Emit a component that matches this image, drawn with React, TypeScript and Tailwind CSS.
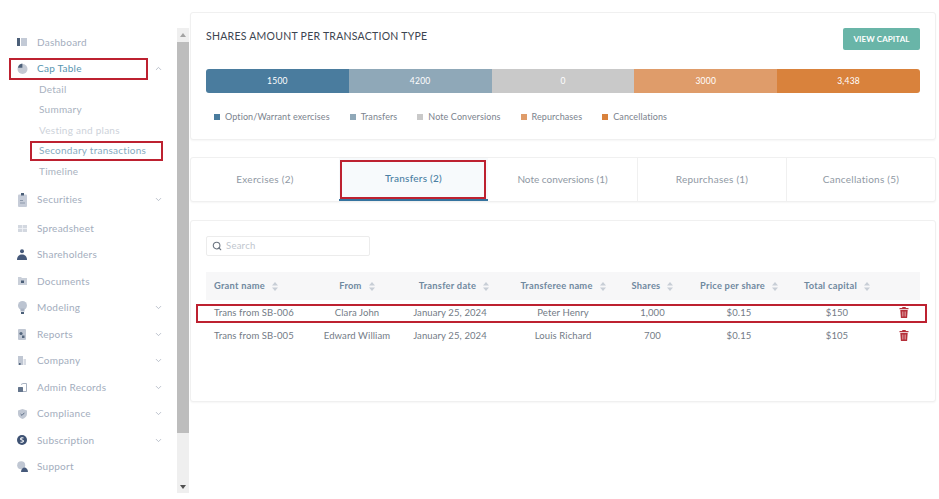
import React from "react";
import { ChevronDown, ChevronUp, Search } from "lucide-react";

const Dash = () => (
  <svg width="10" height="8" viewBox="0 0 10 8"><rect x="0" y="0" width="3" height="8" fill="#4b5f78" /><rect x="4" y="0" width="6" height="8" fill="#c3cad6" /></svg>
);
const Pie = () => (
  <svg width="11" height="11" viewBox="0 0 11 11"><circle cx="5.5" cy="6" r="5" fill="#c4cad4" /><path d="M5.4 0.6 A5 5 0 0 0 1 4.8 L5.4 4.8Z" fill="#4b5f78" /></svg>
);
const Clip = () => (
  <svg width="9" height="14" viewBox="0 0 9 14"><rect x="0" y="1.5" width="9" height="12.5" rx="1" fill="#c6ccd8" /><rect x="3" y="0" width="3" height="2.5" fill="#4b5f78" /><rect x="2" y="7" width="3" height="1" fill="#8d99ab" /><rect x="2" y="9.5" width="5" height="1" fill="#8d99ab" /></svg>
);
const Sheet = () => (
  <svg width="9" height="7" viewBox="0 0 9 7"><rect width="9" height="7" fill="#d3d8e0" /><path d="M4.5 0V7M0 3.5H9" stroke="#f3f4f7" strokeWidth="0.8" /></svg>
);
const Person = () => (
  <svg width="10" height="11" viewBox="0 0 10 11"><circle cx="5" cy="2.2" r="2" fill="#46597a" /><path d="M0 11C0 7 2.5 5.5 5 5.5S10 7 10 11Z" fill="#46597a" /></svg>
);
const Folder = () => (
  <svg width="9" height="8" viewBox="0 0 9 8"><path d="M0 0H3L4 1H9V8H0Z" fill="#c9cfd9" /><rect x="3" y="3.5" width="3" height="2.5" fill="#4b5f78" /></svg>
);
const Bulb = () => (
  <svg width="9" height="13" viewBox="0 0 9 13"><circle cx="4.5" cy="4.5" r="4.5" fill="#bcc4d1" /><rect x="2.5" y="7.5" width="4" height="3" fill="#aab3c3" /><rect x="3" y="11" width="3" height="2" fill="#4b5f78" /></svg>
);
const Report = () => (
  <svg width="8" height="11" viewBox="0 0 8 11"><rect width="8" height="11" rx="1" fill="#c0c7d3" /><circle cx="3" cy="4.5" r="1.6" fill="#56687f" /><rect x="4" y="6.5" width="2.5" height="2.5" fill="#56687f" /></svg>
);
const Building = () => (
  <svg width="8" height="9" viewBox="0 0 8 9"><rect width="5" height="9" fill="#c0c7d3" /><rect x="5.5" y="3" width="2.5" height="6" fill="#d7dbe3" /><rect x="1" y="7" width="1.6" height="2" fill="#56687f" /></svg>
);
const Admin = () => (
  <svg width="9" height="9" viewBox="0 0 9 9"><path d="M3 1.5L5 0.5H8.5V8.5H5" fill="none" stroke="#a9b2c1" /><rect x="0" y="4" width="5" height="5" rx="0.5" fill="#64758c" /></svg>
);
const Shield = () => (
  <svg width="9" height="10" viewBox="0 0 9 10"><path d="M4.5 0L9 1.6V5C9 7.5 6.8 9 4.5 10 2.2 9 0 7.5 0 5V1.6Z" fill="#c0c7d3" /><path d="M2.6 5L4 6.4L6.4 3.8" fill="none" stroke="#5c6d85" strokeWidth="1" /></svg>
);
const Coin = () => (
  <svg width="10" height="10" viewBox="0 0 10 10"><circle cx="5" cy="5" r="5" fill="#3e5273" /><path d="M6.5 3.2C5.8 2.6 3.6 2.6 3.6 3.9 3.6 5.2 6.5 4.8 6.5 6.1 6.5 7.4 4.2 7.4 3.5 6.8" fill="none" stroke="#fff" strokeWidth="1.1" /></svg>
);
const Support = () => (
  <svg width="11" height="11" viewBox="0 0 11 11"><circle cx="4.2" cy="4.2" r="4" fill="#c0c7d3" /><path d="M4 11C4 8 6 6.5 7.5 6.5S11 8 11 11Z" fill="#46597a" /></svg>
);

const Main = ({ icon, label, arrow, className = "" }: { icon: React.ReactNode; label: string; arrow?: boolean; className?: string }) => (
  <div className={`flex h-[26.5px] items-center text-[#a3adbd] ${className}`}>
    <span className="flex w-[37px] shrink-0 justify-center pl-[10px] pr-[3px]">{icon}</span>
    <span>{label}</span>
    {arrow && <ChevronDown className="ml-auto mr-[14px] text-[#a7afbc]" size={9} strokeWidth={2} />}
  </div>
);

const Sub = ({ label, className = "text-[#a9b2c0]" }: { label: string; className?: string }) => (
  <div className={`flex h-[20.5px] items-center pl-[39px] ${className}`}>{label}</div>
);

const Swatch = ({ color, label }: { color: string; label: string }) => (
  <div className="flex items-center gap-[5px]">
    <span className={`h-[6px] w-[6px] ${color}`} />
    <span>{label}</span>
  </div>
);

const Sort = () => (
  <svg className="ml-[7px] shrink-0" width="6" height="9" viewBox="0 0 6 9"><path d="M3 0L6 3.5H0ZM3 9L0 5.5H6Z" fill="#c8ced6" /></svg>
);

const Head = ({ label, className = "justify-center" }: { label: string; className?: string }) => (
  <div className={`flex items-center ${className}`}>
    <span>{label}</span>
    <Sort />
  </div>
);

const rowGrid = "grid grid-cols-[106px_90px_104px_114px_65px_108px_88px_39px]";

const Row = ({ cells }: { cells: string[] }) => (
  <div className={`${rowGrid} h-[23px] items-center text-[9.5px] tracking-[0.1px] text-[#737b86]`}>
    <div className="pl-[8px]">{cells[0]}</div>
    <div className="text-center">{cells[1]}</div>
    <div className="pr-[8px] text-center">{cells[2]}</div>
    <div className="text-center">{cells[3]}</div>
    <div className="text-center">{cells[4]}</div>
    <div className="text-center">{cells[5]}</div>
    <div className="text-center">{cells[6]}</div>
    <div className="flex justify-end pb-[2px] pr-[11px]">
      <svg width="10" height="11" viewBox="0 0 9 11"><path d="M3 0H6L6.5 1H9V2.2H0V1H2.5Z M0.8 3H8.2L7.6 11H1.4Z" fill="#b5303a" /><path d="M3 4.5V9.5M4.5 4.5V9.5M6 4.5V9.5" stroke="#e9b9bc" strokeWidth="0.6" /></svg>
    </div>
  </div>
);

export default function App() {
  return (
    <div className="flex h-[499px] w-[939px] overflow-hidden bg-white font-['Lato',sans-serif] text-[10px] tracking-[0.25px]">
      <aside className="h-full w-[177px] shrink-0 bg-white pt-[29px]">
        <Main icon={<Dash />} label="Dashboard" />
        <div className="relative">
          <div className="flex h-[26.5px] items-center text-[#5795b0]">
            <span className="flex w-[37px] shrink-0 justify-center pl-[10px] pr-[3px]"><Pie /></span>
            <span>Cap Table</span>
            <ChevronUp className="ml-auto mr-[14px] text-[#a7afbc]" size={9} strokeWidth={2} />
          </div>
          <div className="absolute left-[9px] top-[2px] h-[22px] w-[139px] border-2 border-[#bd2130]" />
        </div>
        <div className="-mt-[3px]">
          <Sub label="Detail" />
          <Sub label="Summary" />
          <Sub label="Vesting and plans" className="text-[#cdd2da]" />
          <div className="relative">
            <Sub label="Secondary transactions" className="text-[#86abc0]" />
            <div className="absolute left-[30px] top-0 h-[20px] w-[133px] border-2 border-[#bd2130]" />
          </div>
          <Sub label="Timeline" />
        </div>
        <Main icon={<Clip />} label="Securities" arrow className="mt-[5px]" />
        <Main icon={<Sheet />} label="Spreadsheet" className="mt-[1.75px]" />
        <Main icon={<Person />} label="Shareholders" />
        <Main icon={<Folder />} label="Documents" />
        <Main icon={<Bulb />} label="Modeling" arrow />
        <Main icon={<Report />} label="Reports" arrow />
        <Main icon={<Building />} label="Company" arrow />
        <Main icon={<Admin />} label="Admin Records" arrow />
        <Main icon={<Shield />} label="Compliance" arrow />
        <Main icon={<Coin />} label="Subscription" arrow />
        <Main icon={<Support />} label="Support" />
      </aside>

      <div className="mt-[28px] flex h-[465px] w-[12px] shrink-0 flex-col bg-[#efefef]">
        <div className="flex h-[14px] items-center justify-center">
          <svg width="6" height="4" viewBox="0 0 6 4"><path d="M3 0L6 4H0Z" fill="#a3a3a3" /></svg>
        </div>
        <div className="h-[391px] bg-[#bdbdbd]" />
        <div className="mt-auto flex h-[13px] items-center justify-center">
          <svg width="6" height="4" viewBox="0 0 6 4"><path d="M3 4L6 0H0Z" fill="#505050" /></svg>
        </div>
      </div>

      <main className="ml-[1px] w-[746px] shrink-0 pt-[12px]">
        <section className="h-[128px] rounded-[3px] border border-[#f0f0f0] bg-white px-[15px] pt-[15px] shadow-[0_1px_2px_rgba(0,0,0,0.04)]">
          <div className="flex items-start justify-between">
            <h2 className="pt-[1px] text-[10.5px] font-normal leading-[14px] tracking-[0.25px] text-[#3c4450]">SHARES AMOUNT PER TRANSACTION TYPE</h2>
            <button className="h-[22px] w-[77px] rounded-[2px] bg-[#69b5a8] text-[8px] font-bold tracking-[0.1px] text-white">VIEW CAPITAL</button>
          </div>
          <div className="mt-[19px] flex h-[24px] overflow-hidden rounded-[3px] text-[8.5px] text-white">
            <div className="flex w-[143px] items-center justify-center bg-[#4a7c9e]">1500</div>
            <div className="flex w-[143px] items-center justify-center bg-[#8fa8b8]">4200</div>
            <div className="flex w-[143px] items-center justify-center bg-[#c9c9c9]">0</div>
            <div className="flex w-[143px] items-center justify-center bg-[#df9c6a]">3000</div>
            <div className="flex w-[143px] items-center justify-center bg-[#d9823c]">3,438</div>
          </div>
          <div className="mt-[17px] flex gap-[20px] pl-[8px] text-[9px] leading-[14px] tracking-[0.1px] text-[#7b838e]">
            <Swatch color="bg-[#4a7c9e]" label="Option/Warrant exercises" />
            <Swatch color="bg-[#8fa8b8]" label="Transfers" />
            <Swatch color="bg-[#c9c9c9]" label="Note Conversions" />
            <Swatch color="bg-[#df9c6a]" label="Repurchases" />
            <Swatch color="bg-[#d9823c]" label="Cancellations" />
          </div>
        </section>

        <section className="mt-[17px] flex h-[45px] rounded-[3px] border border-[#f0f0f0] bg-white text-[10px] text-[#9099a4] shadow-[0_1px_2px_rgba(0,0,0,0.04)]">
          <div className="flex w-[148px] items-center justify-center">Exercises (2)</div>
          <div className="relative flex w-[149px] items-center justify-center border-b-2 border-[#34739f] bg-[#f7fafc] font-medium text-[#4a7fa3]">
            Transfers (2)
            <div className="absolute left-[1px] top-[2px] h-[39px] w-[146px] border-2 border-[#bd2130]" />
          </div>
          <div className="flex w-[149px] items-center justify-center tracking-[0px]">Note conversions (1)</div>
          <div className="flex w-[150px] items-center justify-center border-x border-[#f0f0f0]">Repurchases (1)</div>
          <div className="flex flex-1 items-center justify-center">Cancellations (5)</div>
        </section>

        <section className="mt-[18px] h-[182px] rounded-[3px] border border-[#f0f0f0] bg-white px-[15px] pt-[15px] shadow-[0_1px_2px_rgba(0,0,0,0.04)]">
          <div className="flex h-[20px] w-[164px] items-center gap-[4px] rounded-[2px] border border-[#ececec] pl-[5px] text-[9.5px] text-[#c0c6ce]">
            <Search size={10} strokeWidth={2.6} className="text-[#6b7480]" />
            <span>Search</span>
          </div>
          <div className={`${rowGrid} mt-[16px] h-[28px] items-center bg-[#f7f7f8] text-[9.3px] font-bold text-[#70899f]`}>
            <Head label="Grant name" className="justify-start pl-[8px]" />
            <Head label="From" />
            <Head label="Transfer date" />
            <Head label="Transferee name" />
            <Head label="Shares" />
            <Head label="Price per share" />
            <Head label="Total capital" />
            <div />
          </div>
          <div className="relative mt-[2px]">
            <Row cells={["Trans from SB-006", "Clara John", "January 25, 2024", "Peter Henry", "1,000", "$0.15", "$150"]} />
            <div className="absolute -left-[10px] -right-[7px] top-[2px] h-[19px] border-2 border-[#bd2130]" />
            <Row cells={["Trans from SB-005", "Edward William", "January 25, 2024", "Louis Richard", "700", "$0.15", "$105"]} />
          </div>
        </section>
      </main>
    </div>
  );
}
